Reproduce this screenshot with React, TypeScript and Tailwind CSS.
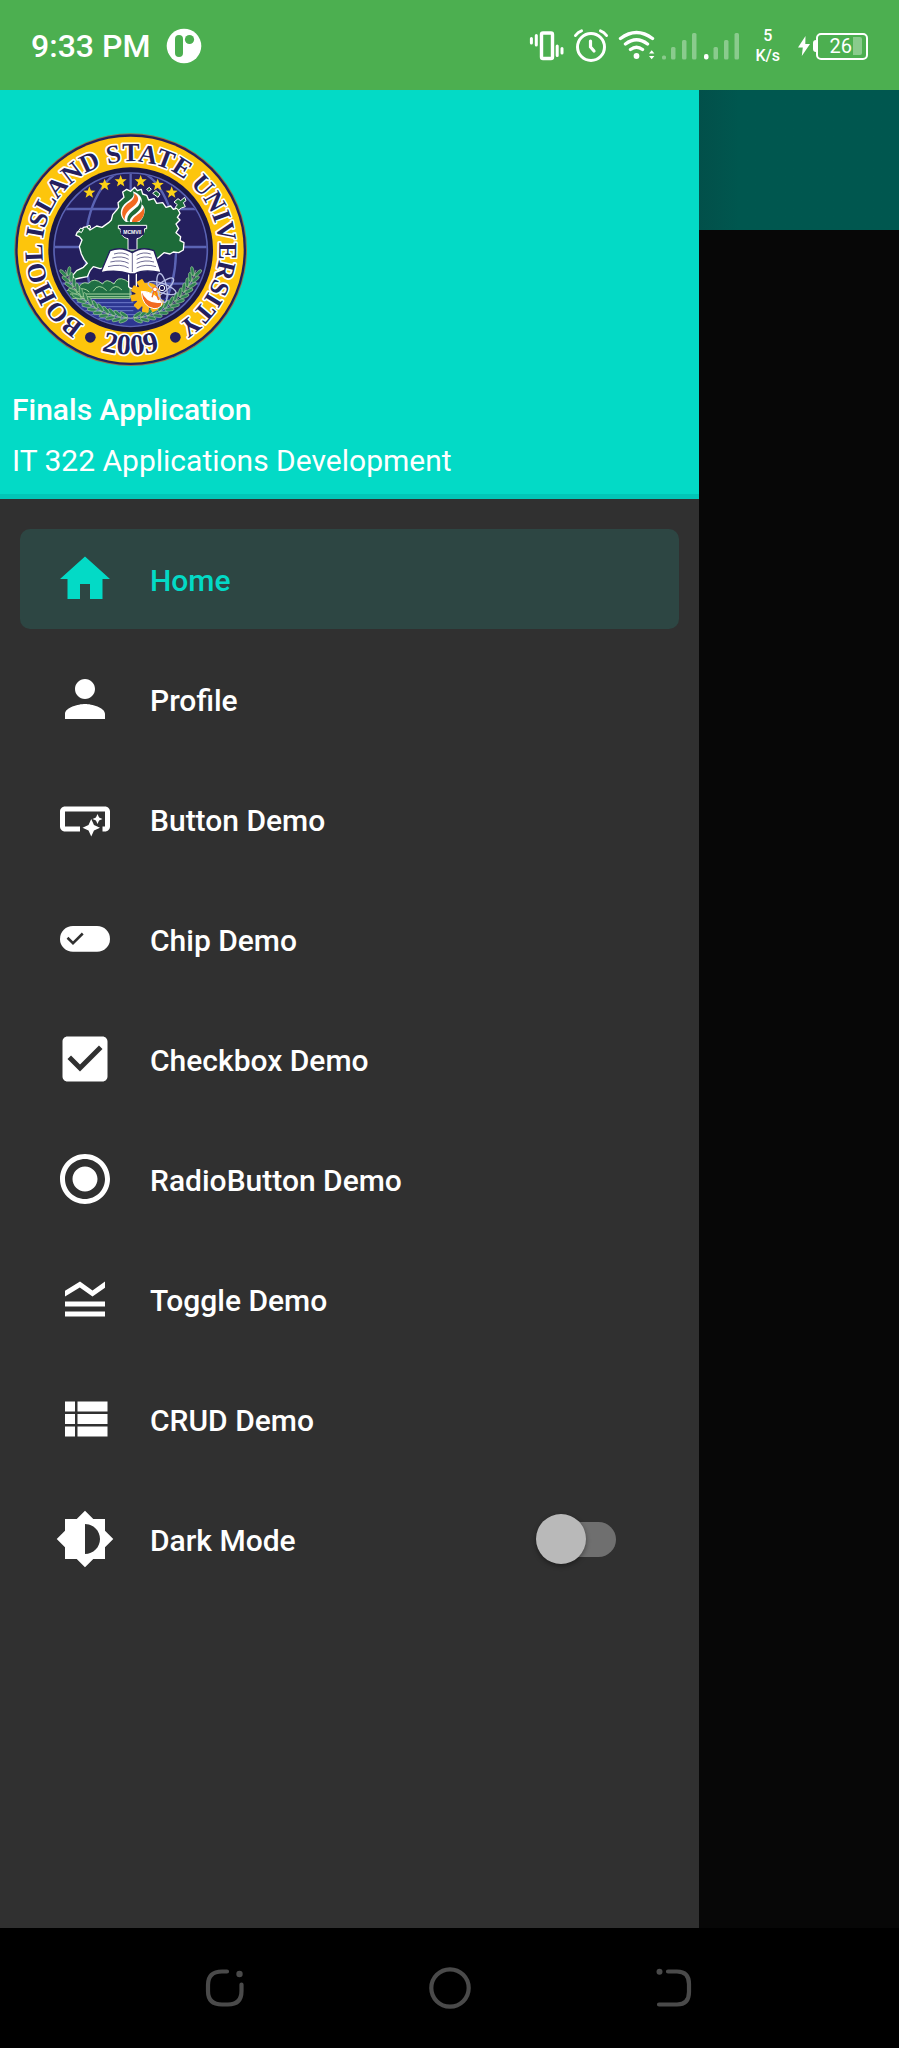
import { useState } from "react";
import type { ReactNode } from "react";

const NAVY = "#241f5e";

function starPoints(cx: number, cy: number, outer: number, inner: number) {
  return Array.from({ length: 10 }, (_, i) => {
    const r = i % 2 === 0 ? outer : inner;
    const a = (Math.PI / 5) * i - Math.PI / 2;
    return `${(cx + r * Math.cos(a)).toFixed(1)},${(cy + r * Math.sin(a)).toFixed(1)}`;
  }).join(" ");
}

const stars: [number, number][] = [
  [268, 218],
  [314, 195],
  [362, 184],
  [422, 184],
  [473, 195],
  [515, 218],
];

// Leaf positions follow two arcs that rise from the bottom centre of the seal.
const leaves = Array.from({ length: 13 }, (_, i) => 6 + i * 5.4).flatMap((deg) => {
  const rad = (deg * Math.PI) / 180;
  return [-1, 1].flatMap((side) =>
    [196, 214].map((r, k) => ({
      x: 392 + side * r * Math.sin(rad),
      y: 389 + r * Math.cos(rad),
      rot: side * (k === 0 ? -deg - 28 : -deg + 28) + (side === 1 ? 0 : 180),
    })),
  );
});

const gearTeeth = [60, 95, 130, 165, 200, 235, 270];

function Seal() {
  return (
    <svg viewBox="30 30 720 720" className="size-60" role="img" aria-label="Bohol Island State University seal">
      <defs>
        <path id="ring-top" d="M268 623A265 265 0 1 1 516 623" />
        <path id="ring-bottom" d="M192 632A314 314 0 0 0 592 632" />
        <clipPath id="globe">
          <circle cx="392" cy="389" r="228" />
        </clipPath>
      </defs>

      <circle cx="392" cy="389" r="349" fill="#8c7a4a" />
      <circle cx="392" cy="389" r="346" fill={NAVY} />
      <circle cx="392" cy="389" r="339" fill="#fdc50c" />
      <circle cx="392" cy="389" r="247" fill="#1a1746" />
      <circle cx="392" cy="389" r="230" fill={NAVY} stroke="#5a63b4" strokeWidth="5" />

      <g clipPath="url(#globe)">
        <g fill="none" stroke="#5a63b4" strokeWidth="7">
          <path d="M160 267H630M160 381H630M160 491H630M392 160V600" />
          <ellipse cx="392" cy="389" rx="136" ry="240" />
        </g>
        <path d="M210 536H520L480 600Q390 640 290 600Z" fill="#2d3792" />
        <path
          d="M230 548H400M245 560H410M255 572H400M270 584H405M290 596H400"
          fill="none"
          stroke="#6c79c9"
          strokeWidth="3"
        />
        <path
          d="M190 520Q210 500 235 510Q240 482 266 490Q282 470 308 492Q318 472 342 492Q352 468 376 480L390 490V535H215Z"
          fill="#1f6f43"
          stroke="#a8d5a0"
          strokeWidth="3"
        />
        <path
          d="M235 510Q250 500 268 516M280 514Q295 486 320 512M330 512Q345 488 366 510M210 522H395M225 530H395"
          fill="none"
          stroke="#a8d5a0"
          strokeWidth="3"
        />
      </g>

      <path
        d="M372 232L368 216L380 208L392 214L404 202L412 212L424 208L428 222L440 226L446 240L462 236L470 250L488 248L498 262L512 258L520 268L532 264L540 280L532 292L540 300L528 312L536 326L528 338L542 350L540 362L552 368L550 390L536 398L520 396L510 402L492 398L478 410L462 424L430 440L330 440L300 446L280 440L270 452L262 470L240 474L222 478L218 466L230 452L250 442L262 430L252 418L244 402L238 380L246 360L238 350L228 346L232 336L244 334L250 322L262 320L270 330L290 318L306 322L326 308L334 300L338 284L350 270L356 262L354 248Z"
        fill="#1d6b39"
        stroke="#fff"
        strokeWidth="4"
        strokeLinejoin="round"
      />
      <path
        d="M522 246l12-10 8 6 12-10 4 10-8 6 6 12-12 4-8 6-10-8 6-8zM440 208l8-6 6 6-8 6zM458 220l10-8 12 10-6 10zM236 332l6-8 8 4-6 10zM262 318l8-2 2 8-8 2z"
        fill="#1d6b39"
        stroke="#fff"
        strokeWidth="3"
      />

      {stars.map(([x, y]) => (
        <polygon key={x} points={starPoints(x, y, 19, 8)} fill="#fcd116" />
      ))}

      <g strokeLinejoin="round">
        <path
          d="M378 306C352 286 362 258 384 244C402 232 404 224 398 214C420 222 430 236 424 252C440 262 436 290 418 306Z"
          fill="#fff"
        />
        <path d="M374 300C358 278 370 258 390 246C404 236 404 226 402 220C418 230 418 242 406 254C390 268 374 276 374 300Z" fill="#f26a21" />
        <path d="M382 304C380 284 396 274 410 262C422 252 422 240 420 236C430 254 424 266 410 278C398 288 388 294 390 306Z" fill="#1d6b39" />
        <path d="M396 306C396 292 412 286 422 276C430 268 430 264 430 260C438 282 428 300 410 306Z" fill="#f26a21" />
        <path
          d="M355 316H440V326H434C432 346 422 354 411 356V390H384V356C370 354 362 344 360 326H355Z"
          fill={NAVY}
          stroke="#fff"
          strokeWidth="3"
        />
        <path d="M386 460H409V500Q398 512 386 500Z" fill={NAVY} stroke="#fff" strokeWidth="4" />
        <path d="M362 344Q398 356 432 344V330H362Z" fill={NAVY} />
      </g>
      <text
        x="397"
        y="341"
        textAnchor="middle"
        fill="#fff"
        fontSize="15"
        fontWeight="700"
        fontFamily="Liberation Sans, sans-serif"
      >
        MCMVII
      </text>

      <path
        d="M330 392Q365 378 397 398Q425 378 462 392L484 458Q430 446 404 462H390Q350 448 302 458Z"
        fill="#fff"
        stroke={NAVY}
        strokeWidth="4"
        strokeLinejoin="round"
      />
      <path
        d="M397 398V456M342 402Q368 394 386 406M337 414Q366 406 386 418M331 426Q364 418 386 430M324 440Q362 430 386 444M410 406Q430 394 452 402M410 418Q432 406 456 414M410 430Q434 418 462 426M410 444Q436 430 468 440"
        fill="none"
        stroke={NAVY}
        strokeWidth="2"
      />

      <g fill="#2f8352" stroke="#b5dba8" strokeWidth="1.5">
        {leaves.map((l, i) => (
          <ellipse key={i} cx={l.x} cy={l.y} rx="14" ry="5" transform={`rotate(${l.rot} ${l.x} ${l.y})`} />
        ))}
      </g>
      <path
        d="M392 594A205 205 0 0 1 196 450M392 594A205 205 0 0 0 588 450"
        fill="none"
        stroke="#b5dba8"
        strokeWidth="2"
      />

      <g fill="#fdb913">
        <circle cx="444" cy="526" r="38" />
        {gearTeeth.map((a) => (
          <rect key={a} x="434" y="474" width="20" height="22" rx="3" transform={`rotate(${-a + 30} 444 526)`} />
        ))}
      </g>
      <g fill="none" stroke="#b9bfe6" strokeWidth="4">
        <ellipse cx="486" cy="504" rx="44" ry="14" transform="rotate(20 486 504)" />
        <ellipse cx="486" cy="504" rx="44" ry="14" transform="rotate(80 486 504)" />
        <ellipse cx="486" cy="504" rx="44" ry="14" transform="rotate(140 486 504)" />
      </g>
      <circle cx="486" cy="504" r="8" fill={NAVY} stroke="#fff" strokeWidth="3" />
      <path d="M424 514Q456 512 486 548Q484 566 462 566Q426 560 424 514Z" fill="#f26a21" stroke="#fff" strokeWidth="3" />
      <path d="M424 514Q462 516 486 548Q440 556 424 514Z" fill="#fff" />
      <path d="M456 532L464 508L476 540" fill="none" stroke="#f26a21" strokeWidth="4" />
      <circle cx="465" cy="508" r="7" fill="#fff" stroke="#f26a21" strokeWidth="3" />

      <g
        fill={NAVY}
        stroke="#fff"
        strokeWidth="10"
        strokeLinejoin="round"
        paintOrder="stroke"
        fontFamily="Liberation Serif, serif"
        fontWeight="700"
      >
        <text fontSize="78" textAnchor="middle">
          <textPath href="#ring-top" startOffset="50%">
            BOHOL ISLAND STATE UNIVERSITY
          </textPath>
        </text>
        <text fontSize="88" textAnchor="middle">
          <textPath href="#ring-bottom" startOffset="50%">
            2009
          </textPath>
        </text>
      </g>
      <circle cx="271" cy="652" r="16" fill={NAVY} />
      <circle cx="526" cy="652" r="16" fill={NAVY} />
    </svg>
  );
}

function StatusBar() {
  return (
    <header className="flex h-[90px] shrink-0 items-center bg-[#4caf50] px-[31px] pt-0.5 text-white">
      <time className="text-[32px] leading-10 font-medium">9:33 PM</time>
      <svg viewBox="0 0 36 36" className="ml-4 size-9" aria-hidden="true">
        <circle cx="18" cy="18" r="17.3" fill="#fff" />
        <rect x="9" y="7" width="8" height="22" rx="4" fill="#4caf50" />
        <circle cx="23.5" cy="11.5" r="4.6" fill="#4caf50" />
      </svg>

      <div className="ml-auto flex items-center">
        <svg viewBox="0 0 36 36" className="size-9" fill="none" stroke="#fff" aria-label="Vibrate" role="img">
          <rect x="12.5" y="5" width="11" height="25.5" rx="1.5" strokeWidth="3.4" />
          <path d="M2.4 10.5v4.5M7.3 7.5v9.5M28.2 18v9.5M33 20.5v4.5" strokeWidth="3" strokeLinecap="round" />
        </svg>
        <svg
          viewBox="0 0 36 36"
          className="ml-2 size-9"
          fill="none"
          stroke="#fff"
          strokeWidth="3"
          strokeLinecap="round"
          aria-label="Alarm"
          role="img"
        >
          <circle cx="18" cy="19" r="13.5" />
          <path d="M17.5 13v6l3.5 4" strokeWidth="3.2" />
          <path d="M2.5 7.5Q5 4 8.5 2.8M33.5 7.5Q31 4 27.5 2.8" />
        </svg>
        <svg
          viewBox="0 0 40 36"
          className="ml-2 h-9 w-10"
          fill="none"
          stroke="#fff"
          strokeWidth="3.4"
          strokeLinecap="round"
          aria-label="Wi-Fi"
          role="img"
        >
          <path d="M3.5 10.5Q19.5 -1.5 35.5 10.5M8.5 16Q19.5 7.500 30.5 16M13.5 21.5Q19.5 17 25.5 21.5" />
          <circle cx="19.5" cy="28" r="2.9" fill="#fff" stroke="none" />
          <path d="M32 25.5l2.7-3.2 2.7 3.2zM32 28l2.7 3.2 2.7-3.2z" fill="#fff" stroke="none" />
        </svg>
        <svg viewBox="0 0 80 36" className="ml-1 h-9 w-20" fill="#fff" aria-label="Signal strength" role="img">
          <g fillOpacity="0.35">
            <rect x="1" y="27.5" width="4" height="4" rx="1.5" />
            <rect x="10" y="19" width="4.5" height="12.5" rx="1.5" />
            <rect x="21" y="12" width="4.5" height="19.5" rx="1.5" />
            <rect x="31" y="5" width="4.5" height="26.5" rx="1.5" />
            <rect x="52.5" y="19" width="4.5" height="12.5" rx="1.5" />
            <rect x="63" y="12" width="4.5" height="19.5" rx="1.5" />
            <rect x="73.5" y="5" width="4.5" height="26.5" rx="1.5" />
          </g>
          <rect x="43" y="26" width="4.5" height="5.5" rx="2" />
        </svg>
        <div className="ml-[14px] text-center text-[16px] leading-5 font-medium">
          <div>5</div>
          <div>K/s</div>
        </div>
        <svg viewBox="0 0 12 22" className="ml-[18px] h-[22px] w-3" fill="#fff" aria-label="Charging" role="img">
          <path d="M7.5 1L0 12.5H4.8L3.8 21L12 9H7.3Z" />
        </svg>
        <div className="ml-[3px] h-3 w-[3px] rounded-l-sm bg-white" />
        <div className="flex h-[27px] w-[52px] items-center justify-end rounded-[5px] border-2 border-white pr-1">
          <span className="text-[20px] leading-5">26</span>
          <span className="ml-px h-[18px] w-[9px] rounded-r-xs bg-white/35" />
        </div>
      </div>
    </header>
  );
}

type Item = { label: string; icon: ReactNode };

const items: Item[] = [
  { label: "Home", icon: <path d="M10 20v-6h4v6h5v-8h3L12 3 2 12h3v8z" /> },
  {
    label: "Profile",
    icon: (
      <path d="M12 12c2.21 0 4-1.79 4-4s-1.79-4-4-4-4 1.79-4 4 1.79 4 4 4zm0 2c-2.67 0-8 1.34-8 4v2h16v-2c0-2.66-5.33-4-8-4z" />
    ),
  },
  {
    label: "Button Demo",
    icon: (
      <path d="M22 9v6c0 1.1-.9 2-2 2h-1v-2h1V9H4v6h6v2H4c-1.1 0-2-.9-2-2V9c0-1.1.9-2 2-2h16c1.1 0 2 .9 2 2zM14.5 19l1.09-2.41L18 15.5l-2.41-1.09L14.5 12l-1.09 2.41L11 15.5l2.41 1.09L14.5 19zM17 14l.62-1.38L19 12l-1.38-.62L17 10l-.62 1.38L15 12l1.38.62L17 14z" />
    ),
  },
  {
    label: "Chip Demo",
    icon: (
      <>
        <rect x="2" y="6.8" width="20" height="10.3" rx="5.15" />
        <path d="M5 11.5l2.2 2.2 3.9-3.9" fill="none" stroke="#303030" strokeWidth="1" />
      </>
    ),
  },
  {
    label: "Checkbox Demo",
    icon: (
      <path d="M19 3H5c-1.11 0-2 .9-2 2v14c0 1.1.89 2 2 2h14c1.11 0 2-.9 2-2V5c0-1.1-.89-2-2-2zm-9 14l-5-5 1.41-1.41L10 14.17l7.59-7.59L19 8l-9 9z" />
    ),
  },
  {
    label: "RadioButton Demo",
    icon: (
      <path d="M12 7c-2.76 0-5 2.24-5 5s2.24 5 5 5 5-2.24 5-5-2.24-5-5-5zm0-5C6.48 2 2 6.48 2 12s4.48 10 10 10 10-4.48 10-10S17.52 2 12 2zm0 18c-4.42 0-8-3.58-8-8s3.58-8 8-8 8 3.58 8 8-3.58 8-8 8z" />
    ),
  },
  {
    label: "Toggle Demo",
    icon: <path d="M20 15H4v-2h16v2zM20 17H4v2h16v-2zM15 11l5-3.55V5l-5 3.55L10 5 4 8.66V11l5.92-3.61L15 11z" />,
  },
  {
    label: "CRUD Demo",
    icon: <path d="M4 14h4v-4H4v4zm0 5h4v-4H4v4zM4 9h4V5H4v4zm5 5h12v-4H9v4zm0 5h12v-4H9v4zM9 5v4h12V5H9z" />,
  },
];

function ItemIcon({ children }: { children: ReactNode }) {
  return (
    <svg viewBox="0 0 24 24" className="size-[60px] shrink-0" fill="currentColor" aria-hidden="true">
      {children}
    </svg>
  );
}

function Drawer() {
  const [active, setActive] = useState("Home");
  const [dark, setDark] = useState(false);
  const row = "flex h-[100px] items-center gap-[35px] rounded-[10px] px-[35px] text-[30px] leading-10 font-medium";

  return (
    <aside className="flex w-7/9 flex-col bg-[#303030]">
      <div className="border-b-[5px] border-[#02c6b7] bg-[#03dac6] pt-10 pb-[13px] text-[30px] leading-10 text-white">
        <div className="px-[10px]">
          <Seal />
        </div>
        <h1 className="mt-5 px-3 font-medium">Finals Application</h1>
        <p className="mt-[11px] px-3">IT 322 Applications Development</p>
      </div>

      <nav className="flex flex-col gap-5 px-5 py-[30px]">
        {items.map(({ label, icon }) => (
          <a
            key={label}
            href="#"
            onClick={(e) => {
              e.preventDefault();
              setActive(label);
            }}
            className={`${row} ${active === label ? "bg-[#2d4643] text-[#03dac6]" : "text-white"}`}
          >
            <ItemIcon>{icon}</ItemIcon>
            <span className="pt-[3px]">{label}</span>
          </a>
        ))}
        <label className={`${row} text-white`}>
          <ItemIcon>
            <path d="M20 15.31L23.31 12 20 8.69V4h-4.69L12 .69 8.69 4H4v4.69L.69 12 4 15.31V20h4.69L12 23.31 15.31 20H20v-4.69zM12 18V6c3.31 0 6 2.69 6 6s-2.69 6-6 6z" />
          </ItemIcon>
          <span className="pt-[3px]">Dark Mode</span>
          <input
            type="checkbox"
            role="switch"
            checked={dark}
            onChange={(e) => setDark(e.target.checked)}
            className="mr-7 ml-auto flex h-[35px] w-[75px] shrink-0 appearance-none items-center rounded-full bg-[#6f6f6f] before:-ml-[5px] before:size-[50px] before:shrink-0 before:rounded-full before:bg-[#b9b9b9] before:shadow-[0_2px_5px_rgba(0,0,0,0.4)] checked:bg-[#03786e] checked:before:ml-[30px] checked:before:bg-[#03dac6]"
          />
        </label>
      </nav>
    </aside>
  );
}

function NavigationBar() {
  const icon = "size-[42px]";
  return (
    <footer className="grid h-[120px] shrink-0 grid-cols-3 place-items-center bg-black px-[12.5%] text-[#4a4a4a]">
      <button type="button" aria-label="Recent apps">
        <svg viewBox="0 0 42 42" className={icon} fill="none" stroke="currentColor" strokeWidth="4.2" strokeLinecap="round">
          <path d="M23 4.5H18Q4 4.5 4 18V24Q4 37.5 18 37.5H24Q37.5 37.5 37.5 24V17.5" />
          <circle cx="35.5" cy="7" r="3.2" fill="currentColor" stroke="none" />
        </svg>
      </button>
      <button type="button" aria-label="Home">
        <svg viewBox="0 0 42 42" className={icon} fill="none" stroke="currentColor" strokeWidth="4.2">
          <circle cx="21" cy="21" r="18.7" />
        </svg>
      </button>
      <button type="button" aria-label="Back">
        <svg viewBox="0 0 42 42" className={icon} fill="none" stroke="currentColor" strokeWidth="4.2" strokeLinecap="round">
          <path d="M15 4.5H24Q36 4.5 36 17V25Q36 37.5 24 37.5H6" />
          <circle cx="6.5" cy="4.8" r="3" fill="currentColor" stroke="none" />
        </svg>
      </button>
    </footer>
  );
}

export default function App() {
  return (
    <div className="flex min-h-screen flex-col bg-black font-[Roboto,sans-serif]">
      <StatusBar />
      <main className="flex flex-1">
        <Drawer />
        <div className="flex-1 bg-[#070707]">
          <div className="h-[140px] bg-linear-to-r from-[#02504a] to-[#00574f] to-20%" />
        </div>
      </main>
      <NavigationBar />
    </div>
  );
}
